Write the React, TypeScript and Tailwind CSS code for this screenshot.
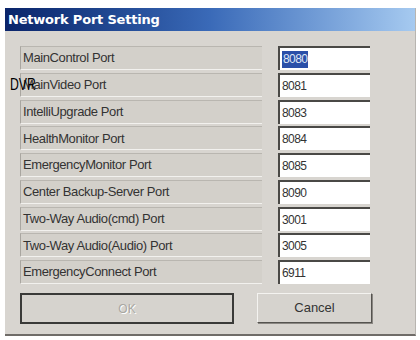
const ports: [string, string][] = [
  ["MainControl Port", "8080"],
  ["MainVideo Port", "8081"],
  ["IntelliUpgrade Port", "8083"],
  ["HealthMonitor Port", "8084"],
  ["EmergencyMonitor Port", "8085"],
  ["Center Backup-Server Port", "8090"],
  ["Two-Way Audio(cmd) Port", "3001"],
  ["Two-Way Audio(Audio) Port", "3005"],
  ["EmergencyConnect Port", "6911"],
];

export default function App() {
  return (
    <div className="relative h-[340px] w-[420px] overflow-hidden bg-white pl-[5px] pr-[4px] pt-[8px] font-['Liberation_Sans',Arial,sans-serif]">
      <div className="flex h-[328px] flex-col border-b-2 border-r border-b-[#6f6c68] border-r-[#b8b5b0] bg-[#d8d5d0]">
        <div className="flex h-[23px] items-center bg-gradient-to-r from-[#0a246a] via-[#3a6ab8] to-[#a6caf0] pl-[3px]">
          <span className="font-['DejaVu_Sans',sans-serif] text-[13px] font-bold tracking-[-0.2px] text-white">
            Network Port Setting
          </span>
        </div>

        <div className="pl-[15px] pt-[15px]">
          <div className="grid grid-cols-[242px_92px] gap-x-[16px] gap-y-[2.75px] auto-rows-[24px]">
            {ports.map(([label, value], i) => (
              <div key={label} className="contents">
                <div className="flex items-center border-l border-t border-b border-l-[#a9a6a0] border-t-[#b9b6b0] border-b-[#f2f1ee] bg-[#d3d0ca] pl-[2px] text-[13px] tracking-[-0.4px] text-[#333]">
                  {label}
                </div>
                <div className="flex items-center border-l-2 border-t-2 border-l-[#4a4946] border-t-[#4a4946] bg-white pl-[2px] text-[12px] tracking-[-0.6px] text-[#333]">
                  {i === 0 ? (
                    <span className="bg-[#2a4fa8] px-[1px] leading-[17px] text-[#dfe6f5]">{value}</span>
                  ) : (
                    value
                  )}
                </div>
              </div>
            ))}
          </div>

          <div className="mt-[9px] flex items-start">
            <div className="flex h-[31px] w-[214px] items-center justify-center border-2 border-[#3a3a38] bg-[#d6d3ce] text-[12px] text-[#a9a7a2] [text-shadow:1px_1px_0_#fff]">
              OK
            </div>
            <div className="ml-[23px] flex h-[30px] w-[115px] items-center justify-center border border-l-[#f4f3f0] border-t-[#f4f3f0] border-r-[#55534f] border-b-[#55534f] bg-[#d6d3ce] text-[13px] text-[#333] shadow-[1px_1px_0_#8a8782]">
              Cancel
            </div>
          </div>
        </div>
      </div>

      <span className="absolute left-[10px] top-[72px] origin-left scale-x-[0.72] font-['Liberation_Sans',sans-serif] text-[17px] text-black">
        DVR
      </span>
    </div>
  );
}
